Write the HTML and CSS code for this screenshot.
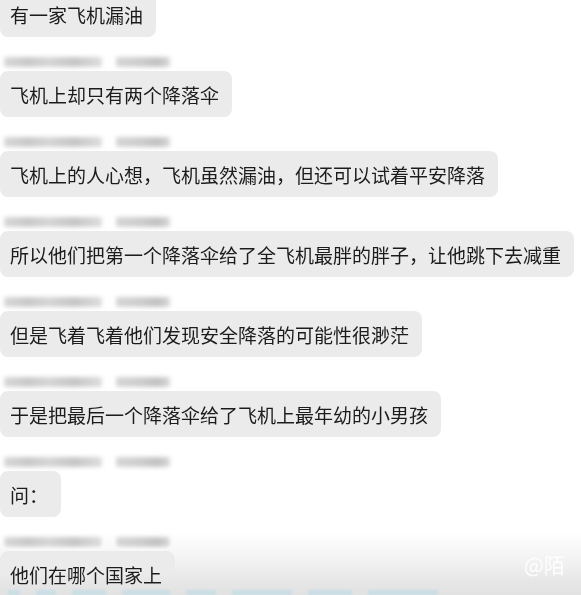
FILE: index.html
```html
<!DOCTYPE html>
<html lang="zh">
<head>
<meta charset="utf-8">
<title>chat</title>
<link rel="stylesheet" href="styles.css">
</head>
<body>
<div class="screen">
  <div class="chat">
    <div class="msg first">
      <div class="bubble">有一家飞机漏油</div>
    </div>
    <div class="msg">
      <div class="name"><span class="seg a"></span><span class="seg b"></span></div>
      <div class="bubble">飞机上却只有两个降落伞</div>
    </div>
    <div class="msg">
      <div class="name"><span class="seg a"></span><span class="seg b"></span></div>
      <div class="bubble">飞机上的人心想，飞机虽然漏油，但还可以试着平安降落</div>
    </div>
    <div class="msg">
      <div class="name"><span class="seg a"></span><span class="seg b"></span></div>
      <div class="bubble">所以他们把第一个降落伞给了全飞机最胖的胖子，让他跳下去减重</div>
    </div>
    <div class="msg">
      <div class="name"><span class="seg a"></span><span class="seg b"></span></div>
      <div class="bubble">但是飞着飞着他们发现安全降落的可能性很渺茫</div>
    </div>
    <div class="msg">
      <div class="name"><span class="seg a"></span><span class="seg b"></span></div>
      <div class="bubble">于是把最后一个降落伞给了飞机上最年幼的小男孩</div>
    </div>
    <div class="msg">
      <div class="name"><span class="seg a"></span><span class="seg b"></span></div>
      <div class="bubble">问：</div>
    </div>
    <div class="msg">
      <div class="name"><span class="seg a"></span><span class="seg b"></span></div>
      <div class="bubble">他们在哪个国家上</div>
    </div>
  </div>
  <div class="fade"></div>
  <div class="bottom-strip">
    <span class="blue w1"></span><span class="blue w2"></span><span class="blue w3"></span><span class="blue w4"></span><span class="blue w5"></span><span class="blue w6"></span><span class="blue w7"></span><span class="blue w8"></span>
  </div>
  <div class="watermark">@陌</div>
</div>
</body>
</html>
```

FILE: styles.css
```css
html, body {
  margin: 0;
  padding: 0;
  background: #ffffff;
}

.screen {
  position: relative;
  width: 581px;
  height: 595px;
  overflow: hidden;
  background: #ffffff;
  font-family: "Noto Sans CJK SC", "Noto Sans", sans-serif;
}

.chat {
  display: flex;
  flex-direction: column;
  align-items: flex-start;
  margin-top: -9px;
}

.msg {
  display: flex;
  flex-direction: column;
  align-items: flex-start;
  padding-top: 19px;
}

.msg.first {
  padding-top: 0;
}

.name {
  display: flex;
  gap: 14px;
  height: 12px;
  margin-bottom: 3px;
  padding-left: 4px;
  filter: blur(2.2px);
}

.seg {
  display: block;
  height: 10px;
  margin-top: 1px;
  border-radius: 2px;
}

.seg.a {
  width: 98px;
  background: linear-gradient(90deg, #d8d8d8 0%, #c9c9c9 25%, #d6d6d6 45%, #c6c6c6 72%, #dddddd 100%);
}

.seg.b {
  width: 54px;
  background: linear-gradient(90deg, #d6d6d6 0%, #cdcdcd 45%, #c2c2c2 78%, #dadada 100%);
}

.bubble {
  box-sizing: border-box;
  height: 46px;
  display: flex;
  align-items: center;
  padding: 0 13px 0 10px;
  background: #ebebeb;
  border-radius: 8px;
  color: #1c1c1c;
  font-size: 19px;
  line-height: 1;
  white-space: nowrap;
}

.fade {
  position: absolute;
  left: 0;
  right: 0;
  bottom: 0;
  height: 62px;
  background: linear-gradient(180deg, #ffffff 0%, #f2f2f2 45%, #e6e6e6 80%, #e2e2e2 100%);
  mix-blend-mode: darken;
}

.bottom-strip {
  position: absolute;
  left: 0;
  right: 0;
  bottom: 0;
  height: 5px;
  display: flex;
  gap: 16px;
  padding-left: 8px;
  filter: blur(1.2px);
  opacity: 0.7;
}

.blue {
  display: block;
  height: 5px;
  background: #bfdde8;
}

.w1 { width: 12px; }
.w2 { width: 20px; }
.w3 { width: 34px; }
.w4 { width: 48px; }
.w5 { width: 30px; }
.w6 { width: 60px; }
.w7 { width: 44px; }
.w8 { width: 70px; }

.watermark {
  position: absolute;
  left: 524px;
  top: 554px;
  font-size: 21px;
  color: rgba(255, 255, 255, 0.9);
  font-family: "Noto Sans CJK SC", sans-serif;
  line-height: 1;
}
```
